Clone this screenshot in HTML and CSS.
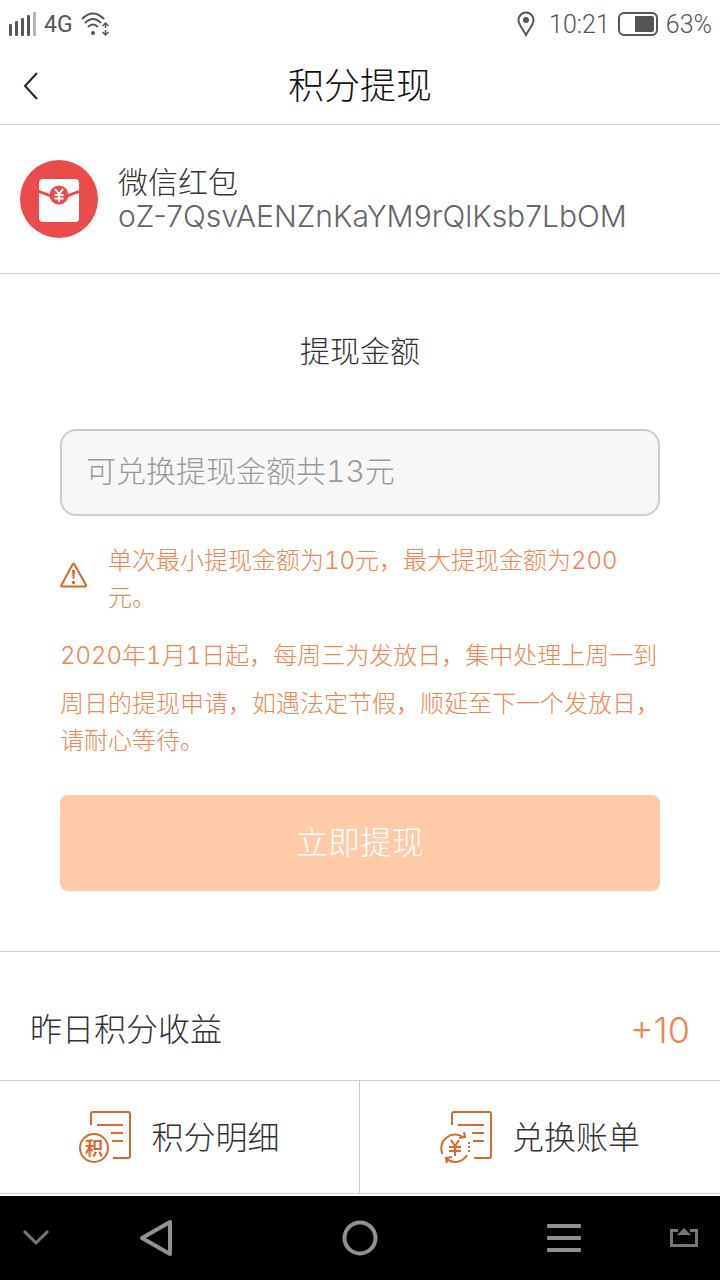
FILE: index.html
```
<!DOCTYPE html>
<html lang="zh-CN">
<head>
	<meta charset="UTF-8">
	<meta name="viewport" content="width=device-width, initial-scale=1">
	<title>积分提现</title>
	<link rel="stylesheet" href="styles.css">
</head>
<body>
	<div class="status">
		<svg width="28" height="26" viewBox="0 0 28 26" fill="#555">
			<rect x="1" y="13" width="3" height="12" rx="1"/>
			<rect x="7" y="10" width="3" height="15" rx="1"/>
			<rect x="13" y="7" width="3" height="18" rx="1"/>
			<rect x="19" y="4" width="3" height="21" rx="1"/>
			<rect x="25" y="1" width="3" height="24" rx="1" fill="#b5b5b5"/>
		</svg>
		<span class="net">4G</span>
		<svg width="30" height="26" viewBox="0 0 30 26" fill="none" stroke="#555" stroke-width="2">
			<path d="M1 8Q12-3 23 8M4 12Q12 4 20 12M7 16Q12 11 17 16"/>
			<circle cx="12" cy="22" r="2" fill="#555" stroke="none"/>
			<path d="M21.500 15l3-3 3 3M24.500 12v5M21.500 21l3 3 3-3M24.500 24v-5" stroke-width="1.500"/>
		</svg>
		<div class="status-right">
			<svg width="18" height="26" viewBox="0 0 18 26" fill="none" stroke="#555" stroke-width="2">
				<path d="M9 24C6 18 1.500 14 1.500 9a7.500 7.500 0 0 1 15 0C16.500 14 12 18 9 24z"/>
				<circle cx="9" cy="9" r="3" fill="#555" stroke="none"/>
			</svg>
			<span class="time">10:21</span>
			<svg width="40" height="24" viewBox="0 0 40 24">
				<rect x="1" y="1" width="38" height="22" rx="5" fill="none" stroke="#555" stroke-width="2"/>
				<path d="M17 4h17q2 0 2 2v12q0 2-2 2H17z" fill="#555"/>
			</svg>
			<span>63%</span>
		</div>
	</div>

	<header class="header">
		<a href="#" class="back" aria-label="返回">
			<svg width="16" height="28" viewBox="0 0 16 28" fill="none" stroke="#222" stroke-width="2"><path d="M14 1L2 14l12 13"/></svg>
		</a>
		<h1>积分提现</h1>
	</header>

	<section class="account">
		<svg width="78" height="78" viewBox="0 0 78 78">
			<circle cx="39" cy="39" r="39" fill="#ea4c4c"/>
			<path d="M19 30V23q0-4 4-4h32q4 0 4 4v7l-11 4H30z" fill="#fff"/>
			<path d="M19 33l12 4.500h16L59 33v25q0 4-4 4H23q-4 0-4-4z" fill="#fff"/>
			<circle cx="39" cy="35" r="9.500" fill="#ea4c4c"/>
			<path d="M35 29l4 5 4-5M39 34v8M34.500 35h9M34.500 38.500h9" fill="none" stroke="#fff" stroke-width="2"/>
		</svg>
		<div class="info">
			<h2>微信红包</h2>
			<p>oZ-7QsvAENZnKaYM9rQlKsb7LbOM</p>
		</div>
	</section>

	<form class="withdraw">
		<label for="amount">提现金额</label>
		<input type="text" id="amount" class="amount" placeholder="可兑换提现金额共13元">
		<div class="tip">
			<svg width="28" height="26" viewBox="0 0 28 26" fill="none" stroke="#d9682b" stroke-width="2">
				<path d="M12.500 2.500q1-1.500 2 0L26 23q.5 1.500-1 1.500H2.500Q.5 24.500 1.500 23z"/>
				<path d="M12 8h3l-.7 9h-1.600z" fill="#d9682b" stroke="none"/>
				<circle cx="13.500" cy="20.500" r="1.700" fill="#d9682b" stroke="none"/>
			</svg>
			<p>单次最小提现金额为10元，最大提现金额为200元。</p>
		</div>
		<div class="rule">
			<p>2020年1月1日起，每周三为发放日，集中处理上周一到</p>
			<p>周日的提现申请，如遇法定节假，顺延至下一个发放日，请耐心等待。</p>
		</div>
		<button type="button" class="submit">立即提现</button>
	</form>

	<section class="income">
		<span>昨日积分收益</span>
		<span class="num">+10</span>
	</section>

	<nav class="links">
		<a href="#">
			<svg width="54" height="54" viewBox="0 0 54 54" fill="none" stroke="#d9682b" stroke-width="2">
				<path d="M12 15V4q0-2 2-2h35q2 0 2 2v42q0 2-2 2H34M18 15h26M32 23h12M33 31h11"/>
				<circle cx="15" cy="38" r="14"/>
				<text class="badge" x="15" y="45">积</text>
			</svg>
			<span>积分明细</span>
		</a>
		<a href="#">
			<svg width="54" height="54" viewBox="0 0 54 54" fill="none" stroke="#d9682b" stroke-width="2">
				<path d="M12 15V4q0-2 2-2h35q2 0 2 2v42q0 2-2 2H34M18 15h26M32 23h12M33 31h11"/>
				<path d="M2.500 44A13.800 13.800 0 0 1 23 27M19 28l6-1-1-5"/>
				<path d="M27 45A13.800 13.800 0 0 1 6 48.500M12 47l-6 1 1 5"/>
				<path d="M29 32v10" stroke-dasharray="2 2"/>
				<path d="M11 30l4 6 4-6M15 36v10M9 37h12M9 41h12"/>
			</svg>
			<span>兑换账单</span>
		</a>
	</nav>

	<div class="sysbar">
		<button type="button" aria-label="收起">
			<svg width="28" height="18" viewBox="0 0 28 18" fill="none" stroke="#777" stroke-width="3"><path d="M2 2l12 12L26 2"/></svg>
		</button>
		<button type="button" aria-label="后退">
			<svg width="34" height="38" viewBox="0 0 34 38" fill="none" stroke="#919191" stroke-width="4" stroke-linejoin="round"><path d="M31 3v32L3 19z"/></svg>
		</button>
		<button type="button" aria-label="主页">
			<svg width="36" height="36" viewBox="0 0 36 36" fill="none" stroke="#919191" stroke-width="4"><circle cx="18" cy="18" r="15.500"/></svg>
		</button>
		<button type="button" aria-label="菜单">
			<svg width="34" height="28" viewBox="0 0 34 28" fill="#919191"><rect width="34" height="4" rx="1"/><rect y="12" width="34" height="4" rx="1"/><rect y="24" width="34" height="4" rx="1"/></svg>
		</button>
		<button type="button" aria-label="展开">
			<svg width="28" height="20" viewBox="0 0 28 20"><path d="M8 2.500H1.500v15h25v-15H20" fill="none" stroke="#777" stroke-width="3"/><path d="M14 0l7 7H7z" fill="#777"/></svg>
		</button>
	</div>
</body>
</html>
```
FILE: styles.css
```
*{
	margin: 0;
	padding: 0;
	box-sizing: border-box;
}
body{
	display: flex;
	flex-direction: column;
	min-height: 100vh;
	background-color: #fff;
	color: #333;
	font-family: Inter, "Noto Sans CJK SC", sans-serif;
	font-weight: 300;
}
a{
	color: inherit;
	text-decoration: none;
}
svg{
	display: block;
	flex: none;
}
h1,h2,input,button{
	font-family: inherit;
	font-weight: 300;
}
.status{
	display: flex;
	align-items: center;
	gap: 8px;
	height: 48px;
	padding: 0 8px;
	font-family: Roboto, sans-serif;
	font-size: 25px;
	color: #555;
}
.status .net{
	font-size: 23px;
	font-weight: 400;
}
.status-right{
	display: flex;
	align-items: center;
	gap: 8px;
	margin-left: auto;
}
.status-right .time{
	margin-left: 6px;
}
/* 标题栏 */
.header{
	display: grid;
	grid-template-columns: 60px 1fr 60px;
	align-items: center;
	height: 77px;
	border-bottom: 1px solid #ccc;
}
.header .back{
	padding-left: 23px;
}
.header h1{
	font-size: 36px;
	line-height: 48px;
	text-align: center;
	color: #111;
}
.account{
	display: flex;
	align-items: center;
	gap: 20px;
	padding: 35px 20px;
	border-bottom: 1px solid #ccc;
}
.account h2{
	font-size: 30px;
	line-height: 34px;
}
.account p{
	font-size: 30px;
	line-height: 34px;
	color: #666;
}
/* 提现 */
.withdraw{
	padding: 60px;
	border-bottom: 1px solid #ccc;
	font-variant-numeric: tabular-nums;
}
.withdraw label{
	display: block;
	margin-bottom: 60px;
	font-size: 30px;
	line-height: 35px;
	text-align: center;
}
.amount{
	display: block;
	width: 100%;
	height: 87px;
	padding: 0 24px 4px;
	border: 2px solid #ccc;
	border-radius: 16px;
	background-color: #f7f7f7;
	font-size: 30px;
	font-variant-numeric: inherit;
	color: #333;
}
.amount::placeholder{
	color: #999;
}
.tip{
	display: flex;
	align-items: center;
	gap: 20px;
	margin-top: 26px;
}
.tip svg{
	margin-bottom: 8px;
}
.tip p,
.rule p{
	font-size: 24px;
	line-height: 37px;
	color: #f08550;
}
.rule{
	display: grid;
	gap: 11px;
	margin: 21px 0 36px;
}
.submit{
	display: block;
	width: 100%;
	height: 96px;
	padding-bottom: 6px;
	border: 0;
	border-radius: 8px;
	background-color: #ffcaa8;
	font-size: 32px;
	color: #fff;
}
.income{
	display: flex;
	justify-content: space-between;
	align-items: center;
	padding: 54px 30px 26px;
	font-size: 32px;
	line-height: 48px;
	border-bottom: 1px solid #ccc;
}
.income .num{
	font-size: 36px;
	color: #f08550;
}
.links{
	display: grid;
	grid-template-columns: 1fr 1fr;
	border-bottom: 1px solid #ccc;
}
.links a{
	display: flex;
	justify-content: center;
	align-items: center;
	gap: 18px;
	height: 112px;
	font-size: 32px;
}
.links a:first-child{
	border-right: 1px solid #ccc;
}
.links span{
	padding-bottom: 4px;
}
.badge{
	font-size: 18px;
	font-weight: 700;
	text-anchor: middle;
	fill: #d9682b;
	stroke: none;
}
/* 系统导航 */
.sysbar{
	display: grid;
	grid-template-columns: 3fr 7fr 10fr 7fr 3fr;
	align-items: center;
	justify-items: center;
	height: 84px;
	margin-top: auto;
	background-color: #000;
}
.sysbar button{
	border: 0;
	background: none;
}
```
